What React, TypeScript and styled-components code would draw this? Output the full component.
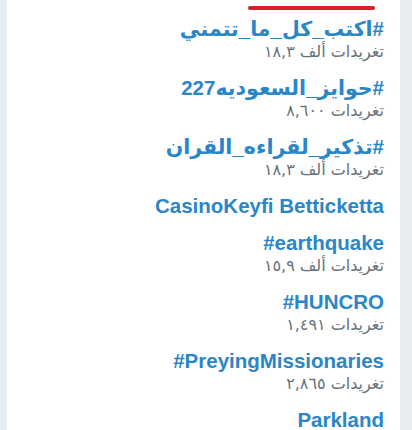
import React from "react";
import styled, { createGlobalStyle } from "styled-components";

const Global = createGlobalStyle`
  html, body { margin: 0; padding: 0; background: #ffffff; }
  body { font-family: "Liberation Sans", "DejaVu Sans", Arial, sans-serif; }
`;

const Page = styled.div`
  width: 412px;
  height: 430px;
  overflow: hidden;
  display: flex;
  background: #e6ecf0;
`;

const Gutter = styled.div<{ $w: number }>`
  width: ${(p) => p.$w}px;
  flex: none;
  background: #e6ecf0;
`;

const Panel = styled.div`
  flex: 1;
  background: #ffffff;
  display: flex;
  flex-direction: column;
  padding-right: 16px;
  overflow: hidden;
`;

const TabBar = styled.div`
  flex: none;
  height: 10px;
  display: flex;
  align-items: flex-end;
  justify-content: flex-end;
  padding-right: 9px;
`;

const TabUnderline = styled.div`
  width: 127px;
  height: 4px;
  border-radius: 2px;
  background: #d81f2a;
`;

const List = styled.ul`
  flex: none;
  list-style: none;
  margin: 0;
  padding: 0;
  display: flex;
  flex-direction: column;
`;

const Row = styled.li`
  padding: 7px 0 6px;
  display: flex;
  flex-direction: column;
  align-items: flex-end;
`;

const Title = styled.div`
  font-family: "Liberation Sans", "DejaVu Sans", sans-serif;
  font-weight: bold;
  font-size: 20.5px;
  line-height: 24px;
  color: #2a86c6;
  text-align: right;
  white-space: nowrap;
  unicode-bidi: plaintext;
`;

const Sub = styled.div`
  display: flex;
  direction: ltr;
  gap: 5px;
  font-family: "DejaVu Sans", sans-serif;
  font-size: 16px;
  line-height: 22px;
  color: #66727b;
  white-space: nowrap;
`;

const Word = styled.span``;

type Trend = { title: string; count?: string; k?: boolean };

const trends: Trend[] = [
  { title: "#اكتب_كل_ما_تتمني", count: "١٨,٣", k: true },
  { title: "#حوايز_السعوديه227", count: "٨,٦٠٠" },
  { title: "#تذكير_لقراءه_القران", count: "١٨,٣", k: true },
  { title: "CasinoKeyfi Betticketta" },
  { title: "#earthquake", count: "١٥,٩", k: true },
  { title: "#HUNCRO", count: "١,٤٩١" },
  { title: "#PreyingMissionaries", count: "٢,٨٦٥" },
  { title: "Parkland" },
];

export default function App() {
  return (
    <>
      <Global />
      <Page>
        <Gutter $w={7} />
        <Panel>
          <TabBar>
            <TabUnderline />
          </TabBar>
          <List>
            {trends.map((t, i) => (
              <Row key={i}>
                <Title dir="auto">{t.title}</Title>
                {t.count && (
                  <Sub>
                    <Word>{t.count}</Word>
                    {t.k && <Word>ألف</Word>}
                    <Word>تغريدات</Word>
                  </Sub>
                )}
              </Row>
            ))}
          </List>
        </Panel>
        <Gutter $w={12} />
      </Page>
    </>
  );
}
